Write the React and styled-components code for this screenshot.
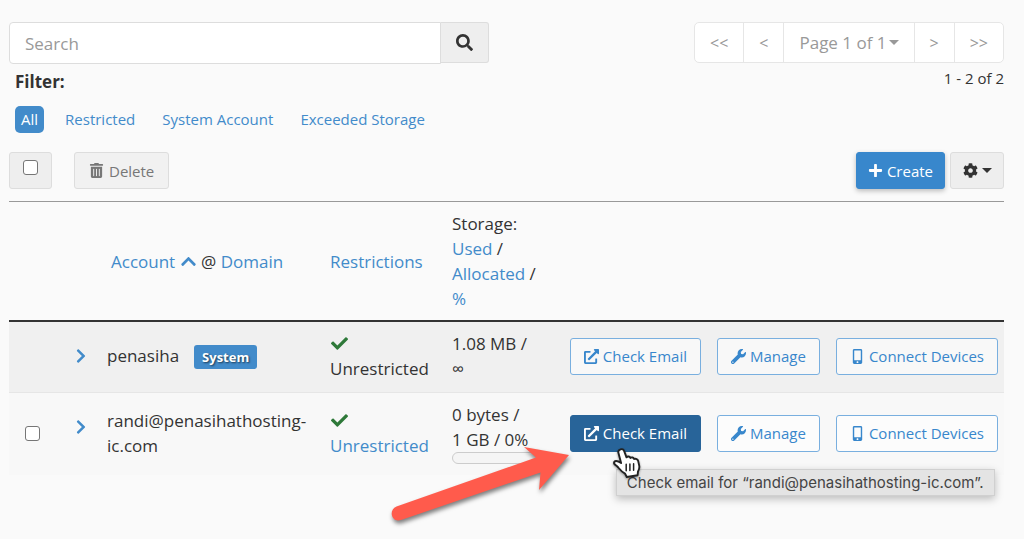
import styled, { createGlobalStyle } from 'styled-components';
import {
  FaCheck,
  FaChevronRight,
  FaChevronUp,
  FaCog,
  FaExternalLinkAlt,
  FaMobileAlt,
  FaPlus,
  FaSearch,
  FaTrashAlt,
  FaWrench,
} from 'react-icons/fa';

const filters = ['All', 'Restricted', 'System Account', 'Exceeded Storage'];

const accounts = [
  {
    name: 'penasiha',
    system: true,
    used: '1.08 MB /',
    allocated: '∞',
  },
  {
    name: 'randi@penasihathosting-ic.com',
    system: false,
    used: '0 bytes /',
    allocated: '1 GB / 0%',
    percent: 0,
    hovered: true,
  },
];

const Pointer = () => (
  <PointerSvg viewBox='0 0 30 32' aria-hidden='true'>
    <path
      d='M8.600 2.300c1.600-.6 3.100.2 3.600 1.800l2.300 6.200c1-1.200 3.200-1 3.900.6 1.200-1 3.200-.5 3.700 1.100 1.600-.8 3.600.2 4.100 2.100l1 4.500c.5 2.300-.1 4-1.200 5.800l-.4 3.800-10.800 1.800-1.700-3.300c-2.500-1.300-4.900-3.800-6.900-6.200-1.400-1.600-3.100-2.400-3.900-3.600-.8-1.500.3-2.900 1.900-2.900 1.900 0 3.500 1.100 4.900 2.100L6.400 5.800c-.5-1.600.5-2.900 2.200-3.500z'
      fill='#fff'
      stroke='#222'
      strokeWidth='1.900'
      strokeLinejoin='round'
    />
    <path
      d='M14.200 17.300v6.500M17.900 17v6.500M21.600 16.700v6.500'
      stroke='#222'
      strokeWidth='1.500'
      strokeLinecap='round'
    />
  </PointerSvg>
);

const Arrow = () => (
  <ArrowSvg viewBox='0 0 190 90' aria-hidden='true'>
    <path
      d='M183 15L138 7l12 10.500L10.500 66.500C2 70 5.500 83 15 80l139.500-47.500L153 50z'
      fill='#ff5b4c'
    />
  </ArrowSvg>
);

const AccountRow = ({ account }) => (
  <Row $striped={account.system}>
    <Cell $inset='16px'>
      {!account.system && (
        <Checkbox type='checkbox' aria-label={`Select ${account.name}`} />
      )}
    </Cell>
    <ExpandCell>
      <ExpandButton aria-label={`Expand ${account.name}`}>
        <FaChevronRight />
      </ExpandButton>
    </ExpandCell>
    <Cell>
      {account.name}
      {account.system && <Badge>System</Badge>}
    </Cell>
    <Cell>
      <CheckIcon />
      {account.system ? (
        <div>Unrestricted</div>
      ) : (
        <div>
          <Link href='#restrictions'>Unrestricted</Link>
        </div>
      )}
    </Cell>
    <StorageCell>
      <div>{account.used}</div>
      <div>{account.allocated}</div>
      {account.percent !== undefined && (
        <Meter>
          <MeterBar style={{ width: `${account.percent}%` }} />
        </Meter>
      )}
    </StorageCell>
    <Cell>
      <Actions>
        <ActionWrap>
          <ActionButton $active={account.hovered}>
            <FaExternalLinkAlt />
            Check Email
          </ActionButton>
          {account.hovered && (
            <>
              <Arrow />
              <Tooltip role='tooltip'>
                Check email for “{account.name}”.
              </Tooltip>
              <Pointer />
            </>
          )}
        </ActionWrap>
        <ActionButton>
          <FaWrench />
          Manage
        </ActionButton>
        <ActionButton>
          <FaMobileAlt />
          Connect Devices
        </ActionButton>
      </Actions>
    </Cell>
  </Row>
);

const App = () => {
  return (
    <Page>
      <GlobalStyle />
      <TopBar>
        <SearchSide>
          <SearchGroup>
            <SearchInput type='text' placeholder='Search' aria-label='Search' />
            <SearchButton aria-label='Search'>
              <FaSearch />
            </SearchButton>
          </SearchGroup>
          <FilterTitle>Filter:</FilterTitle>
        </SearchSide>
        <PagerSide>
          <Pager>
            <PageButton>&lt;&lt;</PageButton>
            <PageButton>&lt;</PageButton>
            <PageButton $label>
              Page 1 of 1<Caret />
            </PageButton>
            <PageButton>&gt;</PageButton>
            <PageButton>&gt;&gt;</PageButton>
          </Pager>
          <Count>1 - 2 of 2</Count>
        </PagerSide>
      </TopBar>
      <Filters>
        {filters.map((filter, index) => (
          <FilterLink key={filter} href='#filter' $active={index === 0}>
            {filter}
          </FilterLink>
        ))}
      </Filters>
      <Toolbar>
        <SelectAll>
          <Checkbox type='checkbox' aria-label='Select all' />
        </SelectAll>
        <DeleteButton disabled>
          <FaTrashAlt />
          Delete
        </DeleteButton>
        <CreateButton>
          <FaPlus />
          Create
        </CreateButton>
        <SettingsButton aria-label='Settings'>
          <FaCog />
          <Caret />
        </SettingsButton>
      </Toolbar>
      <Table>
        <colgroup>
          <Col $width='48px' />
          <Col $width='44px' />
          <Col />
          <Col $width='122px' />
          <Col $width='112px' />
          <Col $width='446px' />
        </colgroup>
        <thead>
          <tr>
            <HeadCell />
            <HeadCell />
            <HeadCell $inset='10px'>
              <Link href='#account'>
                Account <FaChevronUp />
              </Link>{' '}
              @ <Link href='#domain'>Domain</Link>
            </HeadCell>
            <HeadCell>
              <Link href='#restrictions'>Restrictions</Link>
            </HeadCell>
            <HeadCell>
              Storage:
              <br />
              <Link href='#used'>Used</Link> /<br />
              <Link href='#allocated'>Allocated</Link> /<br />
              <Link href='#percent'>%</Link>
            </HeadCell>
            <HeadCell />
          </tr>
        </thead>
        <tbody>
          {accounts.map((account) => (
            <AccountRow key={account.name} account={account} />
          ))}
        </tbody>
      </Table>
    </Page>
  );
};

const GlobalStyle = createGlobalStyle`
  * {
    box-sizing: border-box;
  }

  body {
    margin: 0;
    background: #fafafa;
    color: #333;
    font-family: 'Open Sans', sans-serif;
    font-size: 17px;
    line-height: 25px;
  }

  button,
  input {
    margin: 0;
    font-family: inherit;
  }
`;

const Page = styled.main`
  min-height: 100vh;
  padding: 22px 20px 20px 9px;
`;

const TopBar = styled.div`
  display: flex;
  justify-content: space-between;
  align-items: flex-start;
`;

const SearchSide = styled.div`
  width: calc(50% - 18px);
`;

const SearchGroup = styled.div`
  display: flex;
`;

const SearchInput = styled.input`
  flex: 1;
  min-width: 0;
  height: 42px;
  padding: 0 15px;
  border: 1px solid #ddd;
  border-radius: 4px 0 0 4px;
  background: #fff;
  font-size: 17px;

  &::placeholder {
    color: #999;
  }
`;

const SearchButton = styled.button`
  display: flex;
  align-items: center;
  justify-content: center;
  width: 48px;
  height: 41px;
  border: 1px solid #ddd;
  border-left: 0;
  border-radius: 0 3px 3px 0;
  background: #eee;
  color: #333;
  font-size: 17px;
`;

const FilterTitle = styled.div`
  padding: 5px 6px 5px;
  font-weight: 700;
`;

const PagerSide = styled.div`
  text-align: right;
`;

const Pager = styled.div`
  display: flex;
  border: 1px solid #e6e6e6;
  border-radius: 5px;
  background: #fff;
`;

const PageButton = styled.button`
  display: flex;
  align-items: center;
  gap: 2px;
  height: 39px;
  padding: 0 15px;
  border: 0;
  border-left: 1px solid #e6e6e6;
  background: none;
  color: #999;
  font-size: ${({ $label }) => ($label ? '17px' : '16px')};

  &:first-child {
    border-left: 0;
  }
`;

const Caret = styled.span`
  border: 5px solid transparent;
  border-top-color: currentColor;
  border-bottom: 0;
`;

const Count = styled.div`
  padding-top: 3px;
  font-size: 15px;
`;

const Filters = styled.nav`
  display: flex;
  gap: 15px;
  padding: 7px 6px 19px;
`;

const FilterLink = styled.a`
  padding: 1px 6px;
  border-radius: 5px;
  background: ${({ $active }) => ($active ? '#428bca' : 'none')};
  color: ${({ $active }) => ($active ? '#fff' : '#428bca')};
  font-size: 15px;
  text-decoration: none;
`;

const Toolbar = styled.div`
  display: flex;
  margin-bottom: 12px;
`;

const ToolButton = styled.button`
  display: flex;
  align-items: center;
  justify-content: center;
  gap: 4px;
  height: 37px;
  padding: 0 11px;
  border: 1px solid #ddd;
  border-radius: 3px;
  background: #eee;
  color: #333;
  font-size: 15px;
`;

const SelectAll = styled.label`
  display: flex;
  justify-content: center;
  width: 43px;
  height: 37px;
  margin-right: 22px;
  padding-top: 7px;
  border: 1px solid #ddd;
  border-radius: 3px;
  background: #eee;
`;

const DeleteButton = styled(ToolButton)`
  gap: 5px;
  padding: 0 14px;
  background: #f1f1f1;
  color: #777;
`;

const CreateButton = styled(ToolButton)`
  margin-left: auto;
  margin-right: 5px;
  border-color: #3887cc;
  background: #3887cc;
  color: #fff;
  box-shadow: 0 2px 5px rgba(0, 0, 0, 0.25);
`;

const SettingsButton = styled(ToolButton)`
  width: 54px;
  padding: 0;
`;

const Checkbox = styled.input`
  appearance: none;
  display: block;
  width: 15px;
  height: 15px;
  border: 1px solid #767676;
  border-radius: 3px;
  background: #fff;
`;

const Link = styled.a`
  color: #428bca;
  text-decoration: none;

  svg {
    vertical-align: -2px;
  }
`;

const Table = styled.table`
  width: 100%;
  table-layout: fixed;
  border-collapse: separate;
  border-spacing: 0;
`;

const Col = styled.col`
  width: ${({ $width }) => $width || 'auto'};
`;

const HeadCell = styled.th`
  padding: 9px 6px 9px ${({ $inset }) => $inset || '6px'};
  border-top: 1px solid #999;
  border-bottom: 2px solid #333;
  font-weight: 400;
  text-align: left;
  white-space: nowrap;
`;

const Row = styled.tr`
  background: ${({ $striped }) => ($striped ? '#f0f0f0' : '#f8f8f8')};
`;

const Cell = styled.td`
  padding: 9px 6px 11px ${({ $inset }) => $inset || '6px'};
  vertical-align: middle;

  ${Row}:first-child & {
    border-bottom: 1px solid #e6e6e6;
  }
`;

const ExpandCell = styled(Cell)`
  vertical-align: top;
`;

const ExpandButton = styled.button`
  display: flex;
  align-items: center;
  height: 49px;
  padding: 0 10px;
  border: 0;
  background: none;
  color: #428bca;
  font-size: 16px;
`;

const Badge = styled.span`
  display: inline-block;
  margin-left: 15px;
  padding: 0 8px;
  border-radius: 3px;
  background: #428bca;
  color: #fff;
  font-size: 13px;
  font-weight: 700;
  line-height: 24px;
  text-shadow: 1px 1px 2px rgba(0, 0, 0, 0.6);
`;

const CheckIcon = styled(FaCheck)`
  display: block;
  height: 25px;
  margin-left: 1px;
  color: #2e7939;
`;

const StorageCell = styled(Cell)`
  padding-right: 14px;
`;

const Meter = styled.div`
  height: 12px;
  border: 1px solid #ccc;
  border-radius: 6px;
  background: #f5f5f5;
  overflow: hidden;
`;

const MeterBar = styled.div`
  height: 100%;
  background: #428bca;
`;

const Actions = styled.div`
  display: flex;
  justify-content: flex-end;
  gap: 16px;
`;

const ActionWrap = styled.div`
  position: relative;
`;

const ActionButton = styled.button`
  display: flex;
  align-items: center;
  gap: 4px;
  height: 37px;
  padding: 0 13px;
  border: 1px solid ${({ $active }) => ($active ? '#286499' : '#79afdf')};
  border-radius: 3px;
  background: ${({ $active }) =>
    $active ? '#286499' : 'rgba(255, 255, 255, 0.5)'};
  color: ${({ $active }) => ($active ? '#fff' : '#3887cc')};
  font-size: 15px;
  white-space: nowrap;
`;

const ArrowSvg = styled.svg`
  position: absolute;
  top: 25px;
  left: -184px;
  width: 190px;
  height: 90px;
  filter: drop-shadow(1px 3px 2px rgba(0, 0, 0, 0.5));
`;

const PointerSvg = styled.svg`
  position: absolute;
  top: 32px;
  left: 42px;
  width: 30px;
  height: 32px;
  filter: drop-shadow(0 1px 1px rgba(0, 0, 0, 0.4));
`;

const Tooltip = styled.div`
  position: absolute;
  top: 54px;
  left: 46px;
  padding: 0 10px;
  border: 1px solid #d0d0d0;
  background: #e4e4e4;
  box-shadow: 0 3px 8px rgba(0, 0, 0, 0.25);
  color: #444;
  font-family: Inter, sans-serif;
  font-size: 15px;
  white-space: nowrap;
`;

export default App;
